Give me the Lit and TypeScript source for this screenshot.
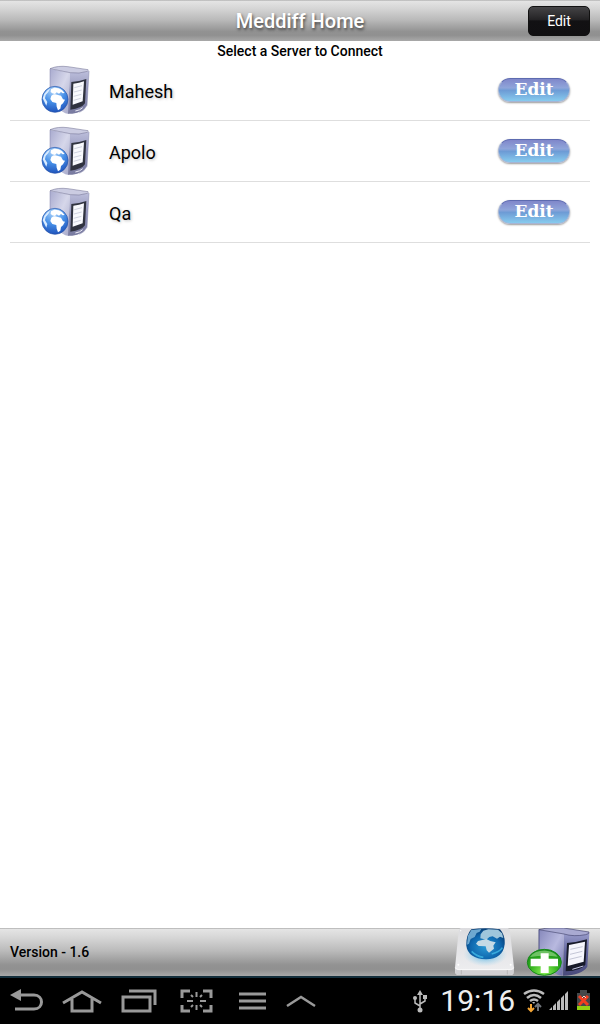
import { LitElement, html, css, svg } from "lit";
import { customElement, property } from "lit/decorators.js";

@customElement("server-icon")
class ServerIcon extends LitElement {
  static styles = css`
    :host { display: block; flex: none; }
    svg { display: block; width: 50px; height: 50px; }
  `;
  render() {
    return html`<svg viewBox="12 9 150 150" aria-hidden="true">
      <defs>
        <linearGradient id="side" x1="0" y1="0" x2="1" y2="1"><stop offset="0" stop-color="#a9abcf"/><stop offset=".5" stop-color="#d6d7ea"/><stop offset="1" stop-color="#a5a7c8"/></linearGradient>
        <linearGradient id="front" x1="0" y1="0" x2="0" y2="1"><stop offset="0" stop-color="#bcbedb"/><stop offset=".5" stop-color="#9092b8"/><stop offset="1" stop-color="#787a9f"/></linearGradient>
        <radialGradient id="sea" cx=".45" cy=".15" r=".9"><stop offset="0" stop-color="#b4d8fb"/><stop offset=".5" stop-color="#4790e8"/><stop offset="1" stop-color="#1a4cb6"/></radialGradient>
      </defs>
      <path d="M42 21L102 32L98 156L88 154L42 128Z" fill="url(#side)"/>
      <path d="M102 32Q132 34 159 27L153 130Q140 153 109 155L96 155Z" fill="url(#front)"/>
      <path d="M42 20Q65 10 96 14L156 23Q159 25 154 28Q130 36 102 32Z" fill="#cbcce2" stroke="#66678a" stroke-width="1.5"/>
      <path d="M42 21V90M159 27L153 130Q145 146 130 151" fill="none" stroke="#8183a8" stroke-width="1.5"/>
      <path d="M106 60Q130 58 151 51L147 124Q137 139 103 143Z" fill="#303340"/>
      <path d="M112 65Q130 63 144 58L140 118L110 128Z" fill="#f8f9fd"/>
      <path d="M115 77L138 71M114 90L137 84M113 103L136 97M113 115L134 109" stroke="#cfd2e0" stroke-width="3"/>
      <path d="M118 147Q132 145 140 137" stroke="#eeeef8" stroke-width="3" fill="none"/>
      <circle cx="57" cy="112" r="39" fill="url(#sea)" stroke="#2250a8" stroke-width="2"/>
      <path d="M45 82L55 77L68 79L78 84L86 93L80 94L75 90L69 95L62 91L57 96L49 94L44 90Z" fill="#fff"/>
      <path d="M46 101Q54 95 63 98L75 101L81 112L87 113L81 124L75 129L73 140L66 145L62 134L61 123L49 120L43 111Z" fill="#fff"/>
      <path d="M20 109L25 95L35 84L42 80L37 90L29 99L27 109L34 120L31 131Z" fill="#d9ebff"/>
    </svg>`;
  }
}

@customElement("app-root")
class AppRoot extends LitElement {
  @property({ attribute: false }) servers = ["Mahesh", "Apolo", "Qa"];

  static styles = css`
    :host { display: flex; flex-direction: column; min-height: 100vh; background: #fff; color: #000; font-family: Roboto, sans-serif; }
    * { box-sizing: border-box; }
    button { font-family: inherit; cursor: pointer; }
    svg { display: block; flex: none; }
    .bar { background: linear-gradient(#aaa 0, #e4e4e4 3%, #d6d6d6 20%, #bababa 48%, #929292 77%, #909090 86%, #a9a9a9 100%); }
    .header { display: grid; grid-template-columns: 1fr auto 1fr; align-items: center; height: 41px; padding: 0 10px; }
    h1 { grid-column: 2; margin: 0; font-size: 20px; line-height: 24px; font-weight: 500; color: #fff; text-shadow: 1px 2px 3px #444; }
    .edit { justify-self: end; width: 62px; height: 30px; border: 1px solid #111; border-radius: 5px; padding: 0; background: linear-gradient(#454446, #242325 45%, #121113 50%, #111012); color: #fff; font-size: 14px; line-height: 20px; }
    main { flex: 1; }
    h2 { margin: 0; height: 19px; font-size: 14px; line-height: 20px; font-weight: 500; text-align: center; }
    ul { margin: 0 10px; padding: 0; list-style: none; }
    li { display: flex; align-items: center; height: 61px; padding: 0 20px 0 30px; border-bottom: 1px solid #dedede; }
    .name { flex: 1; text-align: left; border: 0; background: none; padding: 4px 0 0 19px; font-size: 18px; line-height: 24px; color: #000; text-shadow: 1px 1px 3px #bbb; }
    .pill { width: 72px; height: 24px; padding: 0 0 3px; border: 1px solid #a5b4d4; border-top-color: #5d6bb0; border-radius: 12px; background: linear-gradient(#8087ca, #8fa5da 40%, #6d9bd5 52%, #87cbee); box-shadow: 0 1px 2px #999; color: #fff; font: 700 17px/18px "DejaVu Serif", serif; }
    .footer { display: flex; align-items: center; justify-content: space-between; height: 48px; padding: 0 8px 0 10px; }
    .version { font-size: 14px; line-height: 20px; font-weight: 500; }
    .tools { display: flex; gap: 11px; }
    .tool { display: block; padding: 0; border: 0; background: none; }
    .system { display: flex; align-items: center; justify-content: space-between; height: 48px; padding: 0 9px 0 10px; border-top: 2px solid #15303d; background: #000; }
    .keys, .status { display: flex; align-items: center; }
    .keys { gap: 19px; }
    .key { display: block; padding: 0; border: 0; background: none; }
    .key:nth-child(4) { margin-left: 4px; }
    .key:nth-child(5) { margin-left: 7px; }
    .status { gap: 4px; }
    time { padding: 0 4px 0 8px; color: #eee; font-size: 30px; line-height: 36px; }
    .battery { margin-left: 4px; }
  `;

  key(label: string, width: number, art: unknown) {
    return html`<button class="key" aria-label=${label}><svg width=${width} height="24" viewBox="0 0 ${width} 24" fill="none" stroke="#999" stroke-width="3" aria-hidden="true">${art}</svg></button>`;
  }

  render() {
    return html`
      <header class="bar header"><h1>Meddiff Home</h1><button class="edit">Edit</button></header>
      <main>
        <h2>Select a Server to Connect</h2>
        <ul>${this.servers.map((name) => html`<li><server-icon></server-icon><button class="name">${name}</button><button class="pill" aria-label="Edit ${name}">Edit</button></li>`)}</ul>
      </main>
      <footer>
        <div class="bar footer">
          <span class="version">Version - 1.6</span>
          <div class="tools">
            <button class="tool" aria-label="Network">
              <svg width="61" height="48" viewBox="42 39 183 144" aria-hidden="true">
                <defs>
                  <linearGradient id="plate" x1="0" y1="0" x2="0" y2="1"><stop offset="0" stop-color="#dcdcdf"/><stop offset="1" stop-color="#efeff1"/></linearGradient>
                  <radialGradient id="halo"><stop offset="0" stop-color="#3fa9df"/><stop offset="1" stop-color="#8fd0ef" stop-opacity="0"/></radialGradient>
                  <radialGradient id="earth" cx=".5" cy=".6" r=".6"><stop offset="0" stop-color="#2998d4"/><stop offset=".65" stop-color="#0f67ae"/><stop offset="1" stop-color="#063b72"/></radialGradient>
                </defs>
                <path d="M62 39H203Q209 41 210 48L222 158L220 176Q218 180 211 180H54Q47 179 46 174L45 158L56 48Q57 41 62 39Z" fill="url(#plate)"/>
                <path d="M46 160Q48 165 57 165H211Q219 165 221 160L220 175Q218 180 211 180H54Q47 179 46 174Z" fill="#d0d0d3"/>
                <path d="M46 158Q48 164 57 164H211Q219 164 221 158" stroke="#fff" stroke-width="2" fill="none"/>
                <path d="M64 165V178M202 165V178" stroke="#aaa" stroke-width="2"/>
                <ellipse cx="136" cy="118" rx="66" ry="36" fill="url(#halo)"/>
                <path d="M94 43Q135 37 180 43Q196 61 194 88Q189 132 138 133Q84 130 79 92Q78 60 94 43Z" fill="url(#earth)"/>
                <path d="M84 62L94 45L124 42L119 50L110 54L104 66L92 72L87 86L81 89Z" fill="#6ea8d0"/>
                <path d="M122 58L130 47L145 43L174 44L186 55L190 69L180 65L171 71L158 64L148 66L139 74L121 70Z" fill="#9fc6dc"/>
                <path d="M114 78L139 72L151 78L167 82L160 92L162 101L147 113L140 106L137 94L116 93L108 86Z" fill="#c5dae5"/>
                <path d="M95 109Q109 124 130 127M155 117Q179 111 187 98" stroke="#47c3ec" stroke-width="5" fill="none" opacity=".7"/>
                <circle cx="62" cy="47" r="2" fill="#fff"/><circle cx="55" cy="149" r="3" fill="#fff"/><circle cx="212" cy="149" r="3" fill="#fff"/>
              </svg>
            </button>
            <button class="tool" aria-label="Add server">
              <svg width="66" height="48" viewBox="258 39 198 144" aria-hidden="true">
                <defs>
                  <linearGradient id="case" x1="0" y1="0" x2="1" y2="1"><stop offset="0" stop-color="#8688bb"/><stop offset=".5" stop-color="#b8b9df"/><stop offset="1" stop-color="#696ca5"/></linearGradient>
                  <linearGradient id="face" x1="0" y1="0" x2="0" y2="1"><stop offset="0" stop-color="#9a9dcc"/><stop offset=".45" stop-color="#62659c"/><stop offset="1" stop-color="#484a7a"/></linearGradient>
                  <radialGradient id="green" cx=".5" cy=".85" r=".8"><stop offset="0" stop-color="#91f35c"/><stop offset=".5" stop-color="#35b31f"/><stop offset="1" stop-color="#178c19"/></radialGradient>
                </defs>
                <path d="M297 43L372 57L368 182L354 180L297 145Z" fill="url(#case)"/>
                <path d="M372 57Q410 62 448 54L442 155Q425 181 369 182Z" fill="url(#face)"/>
                <path d="M297 44Q315 39 333 39H371L447 51Q450 56 437 59Q401 66 372 57Z" fill="#a9aad2" stroke="#464772" stroke-width="2"/>
                <path d="M297 43V108" stroke="#4f5083" stroke-width="3"/>
                <path d="M381 84Q412 82 441 73L436 149Q424 167 377 169Z" fill="#171a29"/>
                <path d="M387 90L435 80L431 140L383 153Z" fill="#f6f6fc"/>
                <path d="M391 103L428 95M390 118L427 109M388 133L425 124" stroke="#c4c6d6" stroke-width="3"/>
                <path d="M397 163L430 153" stroke="#c9cbe9" stroke-width="3"/>
                <ellipse cx="313" cy="142" rx="51" ry="39" fill="url(#green)" stroke="#16891a" stroke-width="3"/>
                <path d="M270 126Q286 105 319 107Q344 110 353 125Q316 119 270 126Z" fill="#b3eaa2" opacity=".55"/>
                <path d="M302 115H326V131H354V154H326V174H302V154H272V131H302Z" fill="#fff"/>
              </svg>
            </button>
          </div>
        </div>
        <div class="system">
          <nav class="keys" aria-label="System">
            ${this.key("Back", 33, svg`<path d="M8 6H24C34 6 34 20 24 20H5"/><path d="M0 6L11 0V12Z" fill="#999" stroke="none"/>`)}
            ${this.key("Home", 40, svg`<path d="M1 14L20 3L39 14M10 10V22H30V10"/>`)}
            ${this.key("Recent apps", 36, svg`<path d="M2 8H29V22H2ZM8 2H34V16"/>`)}
            ${this.key("Screenshot", 33, svg`<path d="M2 9V2H10M23 2H31V9M31 16V22H23M10 22H2V16"/><path d="M7 12H13M20 12H26M16.500 3V8M16.500 16V21M11 6L13 8M20 8L22 6M11 18L13 16M20 16L22 18" stroke-width="2"/>`)}
            ${this.key("Menu", 28, svg`<path d="M0 5H27M0 12H27M0 19H27"/>`)}
            ${this.key("Expand", 30, svg`<path d="M1 17L15 8L29 17" stroke-width="2.500"/>`)}
          </nav>
          <div class="status">
            <svg width="16" height="24" viewBox="0 0 16 24" fill="none" stroke="#bbb" stroke-width="1.500" aria-hidden="true"><path d="M8 4V20M8 17L3 14V10M8 15L13 12V8"/><g fill="#bbb" stroke="none"><path d="M8 1L11 6H5Z"/><circle cx="8" cy="21" r="2.500"/><circle cx="3" cy="9" r="2"/><path d="M11 6H15V10H11Z"/></g></svg>
            <time>19:16</time>
            <svg width="22" height="24" viewBox="0 0 22 24" fill="none" stroke="#bbb" stroke-width="2.500" aria-hidden="true"><path d="M1 5Q11-2 21 5M4 9Q11 3 18 9M7 12Q11 9 15 12"/><path d="M9 13H12L11 15Z" fill="#bbb" stroke="none"/><path d="M8 15V22M5 19L8 22L11 19" stroke="#f5a634" stroke-width="2"/><path d="M15 22V15M12 18L15 15L18 18" stroke="#70747a" stroke-width="2"/></svg>
            <svg width="19" height="24" viewBox="0 0 19 24" fill="#bbb" aria-hidden="true"><path d="M0 21L3 18V21ZM4 17L7 14V21H4ZM8 13L11 10V21H8ZM12 9L15 6V21H12ZM16 5L19 2V21H16Z"/></svg>
            <svg class="battery" width="15" height="24" viewBox="0 0 15 24" aria-hidden="true"><path d="M4 1H11V4H14V21H1V4H4Z" fill="#44484a"/><path d="M1 17H14V21H1Z" fill="#92cf13"/><path d="M3 7L12 16M12 7L3 16" stroke="#f23d20" stroke-width="3"/><path d="M6 9L8 7L10 9" stroke="#ffd0c8" fill="none"/></svg>
          </div>
        </div>
      </footer>
    `;
  }
}
